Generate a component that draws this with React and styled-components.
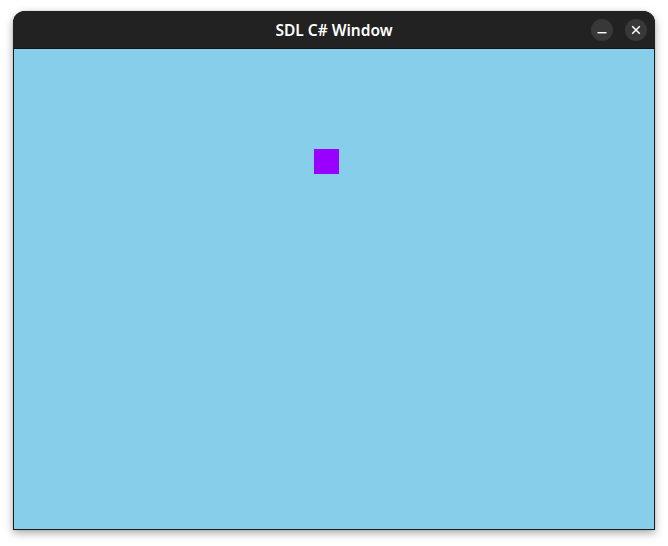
import React from "react";
import styled, { createGlobalStyle } from "styled-components";

const Global = createGlobalStyle`
  html, body { margin: 0; padding: 0; background: #ffffff; }
  body { width: 668px; height: 546px; overflow: hidden; }
`;

const Desktop = styled.div`
  padding: 11px 0 0 13px;
  font-family: "Noto Sans", "Open Sans", sans-serif;
`;

const Window = styled.div`
  width: 642px;
  display: flex;
  flex-direction: column;
  border-radius: 12px 12px 0 0;
  box-shadow: 0 3px 9px rgba(0, 0, 0, 0.35), 0 0 1px rgba(0, 0, 0, 0.4);
  background: #222222;
`;

const TitleBar = styled.div`
  height: 37px;
  display: grid;
  grid-template-columns: 1fr auto 1fr;
  align-items: center;
  background: #222222;
  border-radius: 12px 12px 0 0;
  border-bottom: 1px solid #111111;
`;

const Title = styled.div`
  grid-column: 2;
  color: #ffffff;
  font-size: 15.5px;
  font-weight: 600;
  padding-top: 1px;
`;

const Controls = styled.div`
  grid-column: 3;
  justify-self: end;
  display: flex;
  gap: 12px;
  padding-right: 8px;
`;

const CircleButton = styled.div`
  width: 22px;
  height: 22px;
  border-radius: 50%;
  background: #383838;
  display: flex;
  align-items: center;
  justify-content: center;
`;

const Canvas = styled.div`
  position: relative;
  width: 640px;
  height: 480px;
  background: #87ceeb;
  border: 1px solid #1e1e1e;
  border-top: none;
`;

const Square = styled.div`
  position: absolute;
  left: 300px;
  top: 100px;
  width: 25px;
  height: 25px;
  background: #9900ff;
`;

export default function App() {
  return (
    <>
      <Global />
      <Desktop>
        <Window>
          <TitleBar>
            <Title>SDL C# Window</Title>
            <Controls>
              <CircleButton>
                <svg width="10" height="10" viewBox="0 0 10 10">
                  <rect x="0.5" y="7" width="9" height="1.4" fill="#ffffff" />
                </svg>
              </CircleButton>
              <CircleButton>
                <svg width="10" height="10" viewBox="0 0 10 10">
                  <path d="M1.2 1.2 L8.8 8.8 M8.8 1.2 L1.2 8.8" stroke="#ffffff" strokeWidth="1.5" />
                </svg>
              </CircleButton>
            </Controls>
          </TitleBar>
          <Canvas>
            <Square />
          </Canvas>
        </Window>
      </Desktop>
    </>
  );
}
